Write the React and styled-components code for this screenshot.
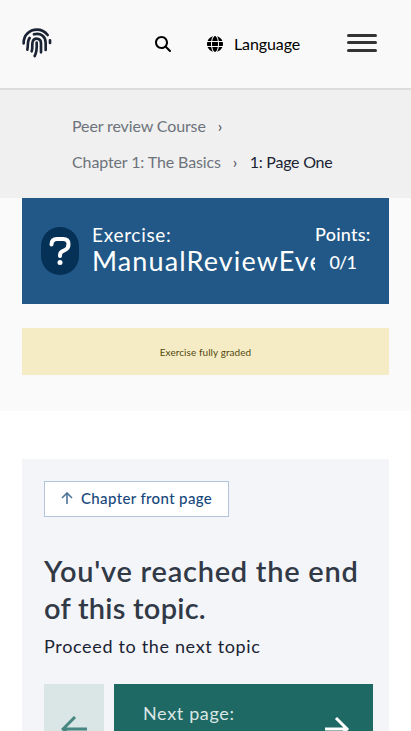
import React from "react";
import styled, { createGlobalStyle } from "styled-components";
import { FaGlobe, FaMagnifyingGlass } from "react-icons/fa6";

const GlobalStyle = createGlobalStyle`
  *, *::before, *::after { box-sizing: border-box; }
  html, body { margin: 0; height: 100%; overflow: hidden; background: #fff; }
  body { font-family: Lato, sans-serif; color: #1a2333; }
  h1, h2, p, ol { margin: 0; padding: 0; font-weight: 400; }
  button { font: inherit; color: inherit; background: none; border: 0; padding: 0; }
`;

const Page = styled.div`
  height: 731px;
  overflow: hidden;
`;

const Header = styled.header`
  display: flex;
  align-items: center;
  height: 90px;
  padding: 0 34px 0 22px;
  background: #f9f9f9;
  border-bottom: 2px solid #dcdcdc;
`;

const Logo = styled.svg`
  width: 30px;
  height: 30px;
  margin: -2px 103px 0 0;
  fill: none;
  stroke: #1a2333;
  stroke-width: 8;
  stroke-linecap: round;
`;

const SearchButton = styled.button`
  display: flex;
  margin-right: 36px;
  color: #000;
`;

const LanguageButton = styled.button`
  display: flex;
  align-items: center;
  gap: 11px;
  color: #000;
  font-size: 16px;
  line-height: 20px;
  letter-spacing: -0.1px;
`;

const MenuButton = styled.button`
  display: flex;
  flex-direction: column;
  gap: 4.5px;
  margin: -3px 0 0 auto;
`;

const MenuBar = styled.span`
  width: 30px;
  height: 3px;
  border-radius: 2px;
  background: #333;
`;

const Breadcrumbs = styled.ol`
  display: flex;
  flex-wrap: wrap;
  align-content: flex-start;
  height: 108px;
  padding: 18px 72px;
  background: #f0f0f0;
  list-style: none;
  font-size: 16px;
  line-height: 36px;
  white-space: nowrap;
`;

const Crumb = styled.li`
  color: ${(p) => (p.$current ? "#1a2333" : "#6d737b")};
  letter-spacing: ${(p) => (p.$current ? "-0.25px" : "-0.12px")};
`;

const Chevron = styled.span`
  margin: 0 12.5px 0 12px;
  color: #444b55;
`;

const Content = styled.main`
  height: 213px;
  padding: 0 22px;
  background: #fafafa;
`;

const ExerciseHeader = styled.section`
  display: flex;
  height: 106px;
  padding: 0 18.5px 0 19px;
  background: #215887;
  color: #fff;
`;

const QuestionBadge = styled.div`
  flex: none;
  display: grid;
  place-items: center;
  width: 38px;
  height: 48px;
  margin-top: 29px;
  border-radius: 19px;
  background: #063157;
`;

const QuestionMark = styled.svg`
  width: 22px;
  height: 30px;
  fill: none;
  stroke: #fff;
  stroke-width: 4;
  stroke-linecap: round;
  stroke-linejoin: round;
`;

const ExerciseTitle = styled.h1`
  flex: 1;
  min-width: 0;
  margin: 25px 0 0 13px;
  overflow: hidden;
  white-space: nowrap;
  font: 400 27px/27px Lato, sans-serif;
  letter-spacing: 1.12px;
`;

const ExerciseLabel = styled.span`
  display: block;
  font-size: 19px;
  line-height: 24px;
  letter-spacing: 0.7px;
`;

const Points = styled.div`
  flex: none;
  width: 55.5px;
  padding-top: 24px;
  text-align: center;
  white-space: nowrap;
  font: 500 18px/24px Lato, sans-serif;
`;

const PointsLabel = styled.div`
  letter-spacing: 0.25px;
`;

const PointsValue = styled.div`
  margin-top: 4px;
  letter-spacing: -0.8px;
`;

const GradedNotice = styled.p`
  display: grid;
  place-items: center;
  height: 47px;
  margin-top: 24px;
  background: #f5ecc6;
  color: #53490f;
  font-size: 10px;
  line-height: 16px;
  letter-spacing: 0.07px;
`;

const TopicEnd = styled.section`
  height: 300px;
  margin: 48px 22px 0;
  padding: 22px 16px 0 22px;
  background: #f4f5f8;
`;

const ChapterLink = styled.button`
  display: flex;
  align-items: center;
  gap: 8px;
  width: 185px;
  height: 36px;
  padding: 0 0 2px 16px;
  border: 1px solid #b2c5da;
  background: #fff;
  color: #16487c;
  font: 500 15px/20px Lato, sans-serif;
  letter-spacing: 0.36px;
  white-space: nowrap;
`;

const Arrow = styled.svg`
  flex: none;
  width: ${(p) => p.$size}px;
  height: ${(p) => p.$size}px;
  fill: none;
  stroke: ${(p) => p.$color};
  stroke-width: ${(p) => p.$weight};
`;

const TopicHeading = styled.h2`
  margin-top: 35px;
  color: #313947;
  font: 600 29px/37px Lato, sans-serif;
  letter-spacing: 0.74px;
  white-space: nowrap;
`;

const SecondLine = styled.span`
  display: block;
  letter-spacing: 0.25px;
`;

const TopicText = styled.p`
  margin-top: 8px;
  font-size: 18px;
  line-height: 24px;
  letter-spacing: 0.66px;
`;

const PageLinks = styled.nav`
  display: flex;
  gap: 10px;
  margin-top: 26px;
`;

const PreviousPage = styled.button`
  display: grid;
  place-items: center;
  width: 60px;
  height: 89px;
  background: #dae6e5;
`;

const NextPage = styled.button`
  display: flex;
  flex: 1;
  justify-content: space-between;
  align-items: center;
  height: 89px;
  padding: 0 23px 0 29px;
  background: #1f6964;
`;

const NextLabel = styled.span`
  align-self: flex-start;
  margin-top: 17px;
  color: #dae6e5;
  font-size: 18px;
  line-height: 24px;
  letter-spacing: 0.65px;
`;

export default function App() {
  return (
    <Page>
      <GlobalStyle />
      <Header>
        <Logo viewBox="65 83 90 90" aria-label="Home">
          <path d="M70 129C69 105 87 88 110 88C123 88 134 94 142 104M149 120V128" />
          <path d="M101 102C121 96 136 109 136 127V149M81 148C84 137 80 122 88 113" />
          <path d="M94 153C98 143 94 132 97 124C101 111 122 112 122 128V156M109 127C110 144 109 156 103 167" />
        </Logo>
        <SearchButton aria-label="Search"><FaMagnifyingGlass size={16} /></SearchButton>
        <LanguageButton><FaGlobe size={16} /><span>Language</span></LanguageButton>
        <MenuButton aria-label="Open menu"><MenuBar /><MenuBar /><MenuBar /></MenuButton>
      </Header>
      <Breadcrumbs>
        <Crumb>Peer review Course<Chevron>›</Chevron></Crumb>
        <Crumb>Chapter 1: The Basics<Chevron>›</Chevron></Crumb>
        <Crumb $current>1: Page One</Crumb>
      </Breadcrumbs>
      <Content>
        <ExerciseHeader>
          <QuestionBadge>
            <QuestionMark viewBox="0 0 22 30">
              <path d="M2.5 8.5Q2.5 3 8 3H14Q19.5 3 19.5 8Q19.5 12.5 16 14L13 15.5Q11 16.5 11 20" />
              <circle cx="11" cy="26.5" r="2.5" fill="#fff" stroke="none" />
            </QuestionMark>
          </QuestionBadge>
          <ExerciseTitle><ExerciseLabel>Exercise:</ExerciseLabel>ManualReviewEve</ExerciseTitle>
          <Points><PointsLabel>Points:</PointsLabel><PointsValue>0/1</PointsValue></Points>
        </ExerciseHeader>
        <GradedNotice>Exercise fully graded</GradedNotice>
      </Content>
      <TopicEnd>
        <ChapterLink>
          <Arrow viewBox="0 0 12 12" $size={12} $color="#4c7599" $weight={1.6}><path d="M6 12V1M1 6L6 1L11 6" /></Arrow>
          Chapter front page
        </ChapterLink>
        <TopicHeading>You've reached the end<SecondLine>of this topic.</SecondLine></TopicHeading>
        <TopicText>Proceed to the next topic</TopicText>
        <PageLinks>
          <PreviousPage aria-label="Previous page">
            <Arrow viewBox="0 0 26 26" $size={26} $color="#478681" $weight={3}><path d="M26 13H3M14 1L2 13L14 25" /></Arrow>
          </PreviousPage>
          <NextPage>
            <NextLabel>Next page:</NextLabel>
            <Arrow viewBox="0 0 26 26" $size={26} $color="#fff" $weight={3}><path d="M1 13H24M12 2L23 13L12 24" /></Arrow>
          </NextPage>
        </PageLinks>
      </TopicEnd>
    </Page>
  );
}
